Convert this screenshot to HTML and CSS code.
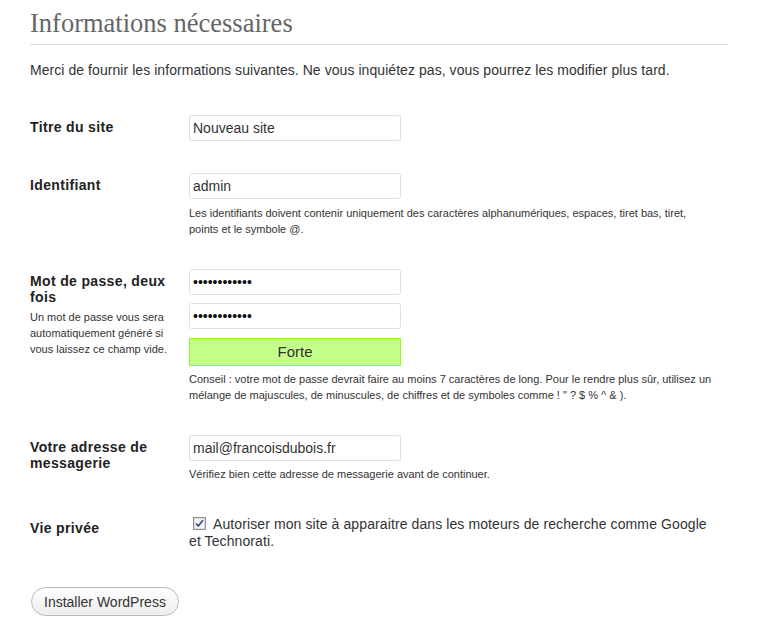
FILE: index.html
```html
<!DOCTYPE html>
<html lang="fr">
<head>
<meta charset="utf-8">
<title>Installation</title>
<link rel="stylesheet" href="styles.css">
</head>
<body>
<main class="page">
  <h1 class="title">Informations nécessaires</h1>
  <p class="intro">Merci de fournir les informations suivantes. Ne vous inquiétez pas, vous pourrez les modifier plus tard.</p>

  <form class="form">
    <div class="row">
      <label class="lbl" for="site">Titre du site</label>
      <div class="field">
        <input class="text" id="site" type="text" value="Nouveau site">
      </div>
    </div>

    <div class="row">
      <label class="lbl" for="user">Identifiant</label>
      <div class="field">
        <input class="text" id="user" type="text" value="admin">
        <p class="hint first">Les identifiants doivent contenir uniquement des caractères alphanumériques, espaces, tiret bas, tiret, points et le symbole @.</p>
      </div>
    </div>

    <div class="row">
      <div class="lbl">
        <label for="pass1">Mot de passe, deux fois</label>
        <p class="lbl-hint">Un mot de passe vous sera automatiquement généré si vous laissez ce champ vide.</p>
      </div>
      <div class="field">
        <input class="text pass" id="pass1" type="password" value="motdepasse12">
        <input class="text pass second" id="pass2" type="password" value="motdepasse12">
        <div class="strength">Forte</div>
        <p class="hint">Conseil : votre mot de passe devrait faire au moins 7 caractères de long. Pour le rendre plus sûr, utilisez un mélange de majuscules, de minuscules, de chiffres et de symboles comme ! " ? $ % ^ &amp; ).</p>
      </div>
    </div>

    <div class="row">
      <label class="lbl" for="email">Votre adresse de messagerie</label>
      <div class="field">
        <input class="text" id="email" type="text" value="mail@francoisdubois.fr">
        <p class="hint">Vérifiez bien cette adresse de messagerie avant de continuer.</p>
      </div>
    </div>

    <div class="row privacy">
      <div class="lbl">Vie privée</div>
      <div class="field">
        <label class="check"><span class="box"><svg width="13" height="13" viewBox="0 0 13 13"><rect x="0.5" y="0.5" width="12" height="12" fill="#f4f4f4" stroke="#8f8f9d"/><rect x="1.5" y="1.5" width="10" height="10" fill="none" stroke="#dcdcdc"/><path d="M3 6.5 L5.3 9 L10 3.2" fill="none" stroke="#2e4c8f" stroke-width="1.7"/></svg></span>Autoriser mon site à apparaitre dans les moteurs de recherche comme Google et Technorati.</label>
      </div>
    </div>

    <div class="submit">
      <button class="button" type="button">Installer WordPress</button>
    </div>
  </form>
</main>
</body>
</html>
```

FILE: styles.css
```css
html, body {
  margin: 0;
  padding: 0;
  background: #ffffff;
}

body {
  font-family: "Liberation Sans", Arial, sans-serif;
  color: #333333;
}

.page {
  width: 698px;
  padding: 0 30px;
}

.title {
  margin: 9px 0 0;
  padding-bottom: 7px;
  border-bottom: 1px solid #dadada;
  font-family: "Liberation Serif", "Times New Roman", serif;
  font-weight: normal;
  font-size: 26.5px;
  line-height: 28px;
  color: #666666;
}

.intro {
  margin: 17px 0 0;
  font-size: 14px;
  line-height: 16px;
  letter-spacing: 0.06px;
}

.form {
  margin-top: 21px;
}

.row {
  display: grid;
  grid-template-columns: 140px 525px;
  column-gap: 19px;
  padding: 16px 0;
}

.row.privacy {
  padding-top: 18px;
}

.lbl {
  padding-top: 4px;
  font-size: 14px;
  line-height: 16px;
  letter-spacing: 0.35px;
  font-weight: bold;
  color: #222222;
}

.lbl-hint {
  margin: 4px 0 0;
  font-size: 11px;
  line-height: 16px;
  letter-spacing: 0;
  font-weight: normal;
  color: #333333;
}

.field {
  display: flex;
  flex-direction: column;
  align-items: flex-start;
}

.text {
  box-sizing: border-box;
  width: 212px;
  height: 26px;
  margin: 0;
  padding: 0 3px;
  border: 1px solid #dfdfdf;
  border-radius: 3px;
  background: #ffffff;
  font-family: "Liberation Sans", Arial, sans-serif;
  font-size: 14px;
  color: #333333;
  outline: none;
}

.text.pass {
  color: #111111;
}

.text.second {
  margin-top: 8px;
}

.strength {
  box-sizing: border-box;
  width: 212px;
  height: 28px;
  margin-top: 9px;
  border: 1px solid #8dff1c;
  background: #c3ff88;
  font-size: 15px;
  line-height: 26px;
  text-align: center;
  color: #333333;
}

.hint {
  margin: 5px 0 0;
  font-size: 11px;
  line-height: 16px;
  color: #333333;
}

.hint.first {
  margin-top: 6px;
}

.check {
  display: block;
  font-size: 14px;
  line-height: 17px;
  letter-spacing: 0.1px;
  color: #333333;
}

.box {
  display: inline-block;
  width: 13px;
  height: 13px;
  margin: 0 7px 0 4px;
  vertical-align: -1px;
}

.box svg {
  display: block;
}

.submit {
  margin-top: 21px;
  padding-left: 1px;
}

.button {
  height: 29px;
  padding: 0 12px;
  border: 1px solid #bbbbbb;
  border-radius: 15px;
  background: linear-gradient(#ffffff, #ededed);
  font-family: "Liberation Sans", Arial, sans-serif;
  font-size: 14px;
  line-height: 16px;
  color: #333333;
}
```
